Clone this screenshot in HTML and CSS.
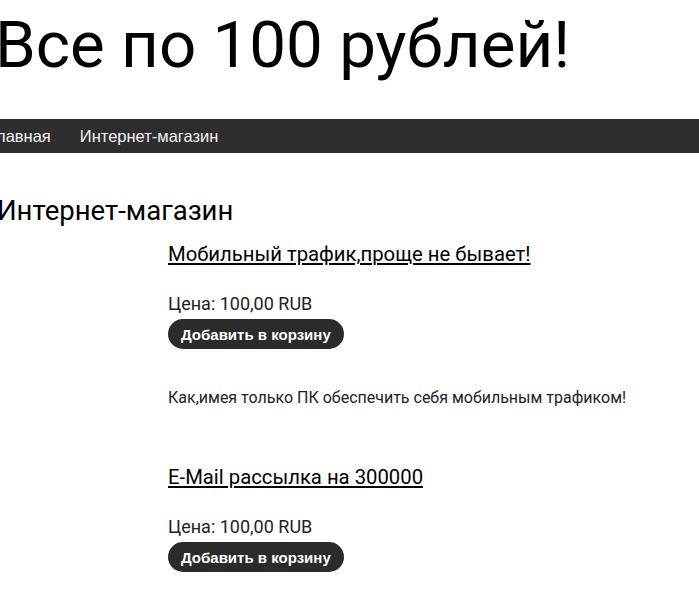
FILE: index.html
```html
<!DOCTYPE html>
<html lang="ru">
<head>
    <meta charset="UTF-8">
    <meta name="viewport" content="width=device-width, initial-scale=1.0">
    <title>Все по 100 рублей!</title>
    <link rel="stylesheet" href="styles.css">
</head>
<body>
    <div class="page">
        <header class="site-header">
            <h1 class="site-title">Все по 100 рублей!</h1>
        </header>

        <nav class="main-nav">
            <a href="#">Главная</a>
            <a href="#">Интернет-магазин</a>
        </nav>

        <main class="content">
            <h2 class="page-title">Интернет-магазин</h2>

            <div class="product">
                <a class="product-title" href="#">Мобильный трафик,проще не бывает!</a>
                <div class="price">Цена: 100,00 RUB</div>
                <button class="add-to-cart">Добавить в корзину</button>
                <p class="description">Как,имея только ПК обеспечить себя мобильным трафиком!</p>
            </div>

            <div class="product">
                <a class="product-title" href="#">E-Mail рассылка на 300000</a>
                <div class="price">Цена: 100,00 RUB</div>
                <button class="add-to-cart">Добавить в корзину</button>
            </div>
        </main>
    </div>
</body>
</html>
```

FILE: styles.css
```css
body {
    margin: 0;
    font-family: Roboto, "Liberation Sans", sans-serif;
    color: #111;
    background-color: #fff;
    overflow: hidden;
}
.page {
    margin-left: -9px;
}
.site-header {
    padding-top: 3px;
    padding-left: 4px;
}
.site-title {
    margin: 0;
    font-size: 65.5px;
    font-weight: 400;
    line-height: 84px;
    color: #000;
}
.main-nav {
    margin-top: 32px;
    height: 34px;
    display: flex;
    align-items: center;
    gap: 29px;
    padding-left: 0;
    background-color: #2e2e2e;
}
.main-nav a {
    font-family: "Liberation Sans", Arial, sans-serif;
    font-size: 16.5px;
    color: #f2f2f2;
    text-decoration: none;
}
.main-nav a:first-child {
    margin-left: -3px;
}
.content {
    padding-top: 42px;
}
.page-title {
    margin: 0 0 15px 6px;
    font-size: 27.5px;
    font-weight: 400;
    line-height: 32px;
    color: #000;
}
.product {
    margin-left: 177px;
    margin-bottom: 57px;
}
.product-title {
    display: block;
    font-size: 20.3px;
    line-height: 24px;
    color: #000;
    text-decoration: underline;
}
.price {
    margin-top: 28px;
    font-size: 18px;
    line-height: 20px;
    color: #222;
}
.add-to-cart {
    display: block;
    margin-top: 5px;
    height: 30px;
    padding: 0 13px;
    border: none;
    border-radius: 15px;
    background-color: #2b2b2b;
    color: #fff;
    font-family: "Liberation Sans", Arial, sans-serif;
    font-size: 15px;
    font-weight: bold;
    cursor: pointer;
}
.description {
    margin: 39px 0 0;
    font-size: 16px;
    line-height: 20px;
    color: #222;
}
```
